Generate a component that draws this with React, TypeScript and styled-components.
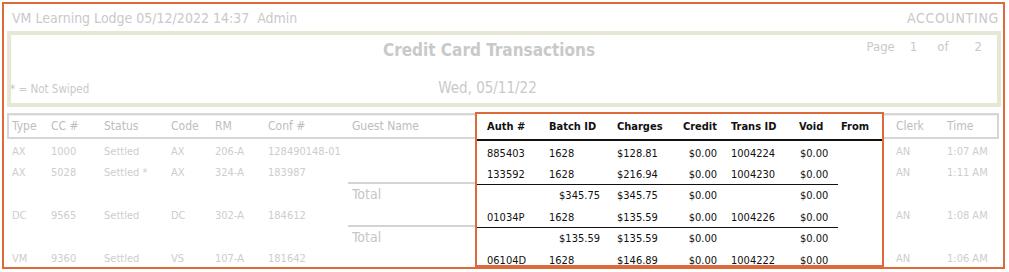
import styled, { createGlobalStyle } from "styled-components";

const GlobalStyle = createGlobalStyle`
  body {
    margin: 0;
    background: #ffffff;
    font-family: "DejaVu Sans Condensed", "DejaVu Sans", sans-serif;
  }
`;

const ORANGE = "#de6a3b";
const BEIGE = "#e8e6d5";
const FAINT = "#c9c9c9";

const Frame = styled.div`
  box-sizing: border-box;
  width: 1003px;
  height: 267px;
  margin: 2px 0 0 2px;
  border: 2px solid ${ORANGE};
  display: flex;
  flex-direction: column;
  overflow: hidden;
`;

const TopBar = styled.div`
  flex-shrink: 0;
  height: 27px;
  display: flex;
  align-items: center;
  justify-content: space-between;
  padding: 0 4px 0 8px;
  color: ${FAINT};
  font-size: 14px;
`;

const Section = styled.span`
  letter-spacing: 0.7px;
`;

const TitleBox = styled.div`
  flex-shrink: 0;
  box-sizing: border-box;
  height: 76px;
  margin: 0 2px 0 3px;
  border: 4px solid ${BEIGE};
  display: grid;
  grid-template-columns: 358px 240px 1fr;
  grid-template-rows: 1fr 1fr;
  align-items: center;
  color: ${FAINT};
`;

const Heading = styled.div`
  text-align: center;
  font-size: 17px;
  font-weight: bold;
  padding-bottom: 4px;
`;

const PageInfo = styled.div`
  justify-self: end;
  display: flex;
  padding: 0 15px 11px 0;
  font-size: 13px;
`;

const PageBit = styled.span<{ $gap: number }>`
  margin-left: ${(p) => p.$gap}px;
`;

const Note = styled.div`
  font-size: 11.5px;
  padding: 5px 0 0 0;
  margin-left: -1px;
`;

const DateLine = styled.div`
  text-align: center;
  font-size: 15px;
  padding: 3px 3px 0 0;
`;

const TableArea = styled.div`
  flex: 1;
  min-height: 0;
  display: flex;
  margin-top: 5px;
  align-items: stretch;
`;

const Side = styled.div<{ $left?: boolean }>`
  padding-top: 1px;
  margin-left: ${(p) => (p.$left ? "3px" : "0")};
`;

const Marked = styled.div`
  box-sizing: border-box;
  border: 2px solid ${ORANGE};
  background: #fff;
  overflow: hidden;
`;

const Row = styled.div<{ $cols: string; $h: number }>`
  display: grid;
  grid-template-columns: ${(p) => p.$cols};
  height: ${(p) => p.$h}px;
  align-items: center;
  box-sizing: border-box;
`;

const HeadRow = styled(Row)<{ $side: "left" | "right" | "mid" }>`
  ${(p) =>
    p.$side === "mid"
      ? `border-bottom: 2px solid #111;`
      : `border: 2px solid #d6d6d6;
         border-${p.$side === "left" ? "right" : "left"}: none;
         box-shadow: inset 0 1px 0 #efefef;`}
`;

const LeftBody = styled(Row)`
  border-left: 2px solid transparent;
  padding-left: 3px;
`;

const Cell = styled.div<{
  $pl?: number;
  $pr?: number;
  $right?: boolean;
  $line?: "gray" | "black";
  $low?: boolean;
}>`
  height: 100%;
  box-sizing: border-box;
  display: flex;
  align-items: center;
  justify-content: ${(p) => (p.$right ? "flex-end" : "flex-start")};
  padding-left: ${(p) => p.$pl ?? 0}px;
  padding-right: ${(p) => p.$pr ?? 0}px;
  padding-top: ${(p) => (p.$low ? 2 : 0)}px;
  white-space: nowrap;
  border-top: ${(p) =>
    p.$line === "gray" ? "2px solid #d4d4d4" : p.$line === "black" ? "1px solid #111" : "none"};
`;

const GrayHead = styled(Cell)`
  color: #bdbdbd;
  font-size: 12px;
`;

const GrayCell = styled(Cell)`
  color: #cdcdcd;
  font-size: 11px;
`;

const TotalLabel = styled(Cell)`
  color: #c6c6c6;
  font-size: 14px;
`;

const DarkHead = styled(Cell)`
  color: #111;
  font-size: 11px;
  font-weight: bold;
`;

const DarkCell = styled(Cell)`
  color: #111;
  font-size: 11px;
`;

const LEFT_COLS = "39px 53px 67px 44px 53px 80px 127px";
const MID_COLS = "72px 68px 59px 51px 68px 43px 44px";
const RIGHT_COLS = "63px 50px";

type Line = {
  total?: boolean;
  h: number;
  type?: string;
  cc?: string;
  status?: string;
  code?: string;
  rm?: string;
  conf?: string;
  auth?: string;
  batch?: string;
  charges: string;
  credit: string;
  trans?: string;
  voided: string;
  clerk?: string;
  time?: string;
};

const lines: Line[] = [
  { h: 22, type: "AX", cc: "1000", status: "Settled", code: "AX", rm: "206-A", conf: "128490148-01", auth: "885403", batch: "1628", charges: "$128.81", credit: "$0.00", trans: "1004224", voided: "$0.00", clerk: "AN", time: "1:07 AM" },
  { h: 21, type: "AX", cc: "5028", status: "Settled *", code: "AX", rm: "324-A", conf: "183987", auth: "133592", batch: "1628", charges: "$216.94", credit: "$0.00", trans: "1004230", voided: "$0.00", clerk: "AN", time: "1:11 AM" },
  { h: 22, total: true, batch: "$345.75", charges: "$345.75", credit: "$0.00", voided: "$0.00" },
  { h: 21, type: "DC", cc: "9565", status: "Settled", code: "DC", rm: "302-A", conf: "184612", auth: "01034P", batch: "1628", charges: "$135.59", credit: "$0.00", trans: "1004226", voided: "$0.00", clerk: "AN", time: "1:08 AM" },
  { h: 22, total: true, batch: "$135.59", charges: "$135.59", credit: "$0.00", voided: "$0.00" },
  { h: 21, type: "VM", cc: "9360", status: "Settled", code: "VS", rm: "107-A", conf: "181642", auth: "06104D", batch: "1628", charges: "$146.89", credit: "$0.00", trans: "1004222", voided: "$0.00", clerk: "AN", time: "1:06 AM" },
];

export default function App() {
  return (
    <>
      <GlobalStyle />
      <Frame>
        <TopBar>
          <span>VM Learning Lodge 05/12/2022 14:37&nbsp; Admin</span>
          <Section>ACCOUNTING</Section>
        </TopBar>
        <TitleBox>
          <div />
          <Heading>Credit Card Transactions</Heading>
          <PageInfo>
            <PageBit $gap={0}>Page</PageBit>
            <PageBit $gap={15}>1</PageBit>
            <PageBit $gap={20}>of</PageBit>
            <PageBit $gap={26}>2</PageBit>
          </PageInfo>
          <Note>* = Not Swiped</Note>
          <DateLine>Wed, 05/11/22</DateLine>
          <div />
        </TitleBox>
        <TableArea>
          <Side $left>
            <HeadRow $side="left" $cols={LEFT_COLS} $h={26} style={{ paddingLeft: 3 }}>
              <GrayHead>Type</GrayHead>
              <GrayHead>CC #</GrayHead>
              <GrayHead>Status</GrayHead>
              <GrayHead>Code</GrayHead>
              <GrayHead>RM</GrayHead>
              <GrayHead>Conf #</GrayHead>
              <GrayHead $pl={4}>Guest Name</GrayHead>
            </HeadRow>
            {lines.map((l, i) => (
              <LeftBody key={i} $cols={LEFT_COLS} $h={l.h}>
                <GrayCell $low>{l.type}</GrayCell>
                <GrayCell $low>{l.cc}</GrayCell>
                <GrayCell $low>{l.status}</GrayCell>
                <GrayCell $low>{l.code}</GrayCell>
                <GrayCell $low>{l.rm}</GrayCell>
                <GrayCell $low>{l.conf}</GrayCell>
                {l.total ? (
                  <TotalLabel $pl={4} $line="gray">Total</TotalLabel>
                ) : (
                  <GrayCell />
                )}
              </LeftBody>
            ))}
          </Side>
          <Marked>
            <HeadRow $side="mid" $cols={MID_COLS} $h={27}>
              <DarkHead $pl={10}>Auth #</DarkHead>
              <DarkHead>Batch ID</DarkHead>
              <DarkHead>Charges</DarkHead>
              <DarkHead $right $pr={10}>Credit</DarkHead>
              <DarkHead $pl={4}>Trans ID</DarkHead>
              <DarkHead $pl={4}>Void</DarkHead>
              <DarkHead $pl={3}>From</DarkHead>
            </HeadRow>
            {lines.map((l, i) => {
              const line = l.total ? "black" : undefined;
              const low = !l.total;
              return (
                <Row key={i} $cols={MID_COLS} $h={l.h}>
                  <DarkCell $pl={10} $line={line} $low={low}>{l.auth}</DarkCell>
                  <DarkCell $right={l.total} $pr={l.total ? 17 : 0} $line={line} $low={low}>
                    {l.batch}
                  </DarkCell>
                  <DarkCell $line={line} $low={low}>{l.charges}</DarkCell>
                  <DarkCell $right $pr={10} $line={line} $low={low}>{l.credit}</DarkCell>
                  <DarkCell $pl={4} $line={line} $low={low}>{l.trans}</DarkCell>
                  <DarkCell $pl={5} $line={line} $low={low}>{l.voided}</DarkCell>
                  <DarkCell />
                </Row>
              );
            })}
          </Marked>
          <Side>
            <HeadRow $side="right" $cols={RIGHT_COLS} $h={26}>
              <GrayHead $pl={12}>Clerk</GrayHead>
              <GrayHead>Time</GrayHead>
            </HeadRow>
            {lines.map((l, i) => (
              <Row key={i} $cols={RIGHT_COLS} $h={l.h}>
                <GrayCell $pl={12} $low>{l.clerk}</GrayCell>
                <GrayCell $low>{l.time}</GrayCell>
              </Row>
            ))}
          </Side>
        </TableArea>
      </Frame>
    </>
  );
}
